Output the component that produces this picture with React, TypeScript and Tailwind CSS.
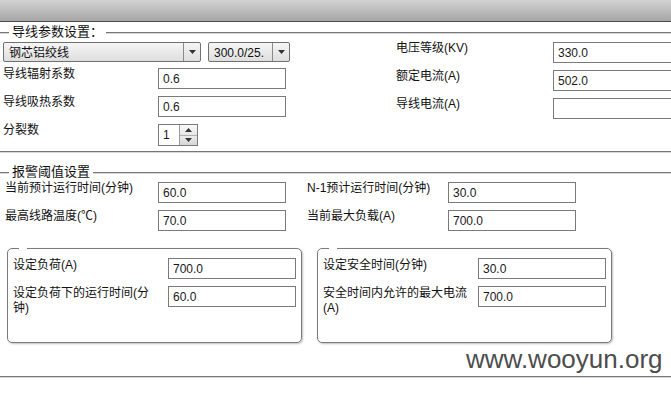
import React from 'react';

const FONT = "font-['Liberation_Sans','Noto_Sans_CJK_SC',sans-serif]";

function Line() {
  return <div className="h-px bg-[#767676] shadow-[0_1px_0_#d8d8d8]" />;
}

function Legend({ text }: { text: string }) {
  return (
    <div className="flex items-start h-[20px]">
      <div className="w-[9px] mt-[10px]">
        <Line />
      </div>
      <span className="px-[3px] text-[13px] leading-[20px] text-[#111]">{text}</span>
      <div className="flex-1 mt-[10px]">
        <Line />
      </div>
    </div>
  );
}

function Arrow({ up }: { up?: boolean }) {
  return (
    <svg width="7" height="4" viewBox="0 0 7 4">
      <path d={up ? 'M0 4 L3.5 0 L7 4 Z' : 'M0 0 L7 0 L3.5 4 Z'} fill="#333" />
    </svg>
  );
}

function Select({ value, className }: { value: string; className: string }) {
  return (
    <div className={`flex h-[20px] border border-[#707070] rounded-[2px] bg-gradient-to-b from-[#f6f6f6] to-[#dedede] ${className}`}>
      <div className="flex-1 pl-[5px] pt-[3px] text-[12px] leading-[15px] text-[#111] overflow-hidden whitespace-nowrap">{value}</div>
      <div className="w-[17px] border-l border-[#8a8a8a] flex items-center justify-center">
        <Arrow />
      </div>
    </div>
  );
}

function Field({ value = '' }: { value?: string }) {
  return (
    <input
      readOnly
      value={value}
      className="h-[21px] w-[128px] shrink-0 border border-[#7a7a7a] bg-white px-[4px] text-[12px] text-[#1a1a1a] outline-none"
    />
  );
}

function Row({ label, value, labelW, className = '' }: { label: string; value?: string; labelW: string; className?: string }) {
  return (
    <div className={`flex items-start ${className}`}>
      <div className={`${labelW} -mt-px text-[12px] leading-[14px] text-[#111] shrink-0`}>{label}</div>
      <Field value={value} />
    </div>
  );
}

function BoxRow({ label, value, className = '' }: { label: string; value: string; className?: string }) {
  return (
    <div className={`flex items-start ${className}`}>
      <div className="w-[146px] mr-[9px] text-[12px] leading-[15px] text-[#111] shrink-0">{label}</div>
      <Field value={value} />
    </div>
  );
}

function Box({ children }: { children: React.ReactNode }) {
  return (
    <div className="relative w-[295px] h-[95px] shrink-0 border border-[#7a7a7a] rounded-[5px] shadow-[1px_1px_2px_rgba(0,0,0,0.25)] pl-[5px] pt-[9px]">
      <span className="absolute left-[11px] -top-[3px] w-[8px] h-[5px] bg-white" />
      {children}
    </div>
  );
}

export default function App() {
  return (
    <div className={`relative w-[671px] h-[393px] overflow-hidden bg-white ${FONT}`}>
      <div className="h-[22px] bg-gradient-to-b from-[#d2d2d2] to-[#a6a6a6] border-b border-[#4a4a4a]" />

      {/* 导线参数 */}
      <Legend text="导线参数设置：" />
      <div className="flex h-[109px]">
        <div className="w-[396px] shrink-0 pl-[3px]">
          <div className="flex gap-[7px]">
            <Select value="钢芯铝绞线" className="w-[198px]" />
            <Select value="300.0/25." className="w-[82px]" />
          </div>
          <Row label="导线辐射系数" value="0.6" labelW="w-[155px]" className="mt-[6px]" />
          <Row label="导线吸热系数" value="0.6" labelW="w-[155px]" className="mt-[7px]" />
          <div className="flex items-start mt-[7px]">
            <div className="w-[155px] -mt-px text-[12px] leading-[14px] text-[#111]">分裂数</div>
            <div className="flex h-[22px] w-[40px] border border-[#7a7a7a] bg-white">
              <div className="flex-1 pl-[4px] text-[12px] leading-[20px] text-[#1a1a1a]">1</div>
              <div className="w-[18px] border-l border-[#9a9a9a] flex flex-col">
                <div className="flex-1 flex items-center justify-center border-b border-[#b0b0b0] bg-gradient-to-b from-[#fafafa] to-[#e6e6e6]">
                  <Arrow up />
                </div>
                <div className="flex-1 flex items-center justify-center bg-gradient-to-b from-[#ececec] to-[#d6d6d6]">
                  <Arrow />
                </div>
              </div>
            </div>
          </div>
        </div>
        <div className="shrink-0">
          <Row label="电压等级(KV)" value="330.0" labelW="w-[157px]" />
          <Row label="额定电流(A)" value="502.0" labelW="w-[157px]" className="mt-[7px]" />
          <Row label="导线电流(A)" labelW="w-[157px]" className="mt-[7px]" />
        </div>
      </div>
      <Line />

      {/* 报警阈值 */}
      <div className="mt-[10px]">
        <Legend text="报警阈值设置" />
      </div>
      <div className="h-[194px]">
        <div className="flex">
          <div className="w-[307px] shrink-0 pl-[5px]">
            <Row label="当前预计运行时间(分钟)" value="60.0" labelW="w-[153px]" />
            <Row label="最高线路温度(℃)" value="70.0" labelW="w-[153px]" className="mt-[7px]" />
          </div>
          <div className="shrink-0">
            <Row label="N-1预计运行时间(分钟)" value="30.0" labelW="w-[141px]" />
            <Row label="当前最大负载(A)" value="700.0" labelW="w-[141px]" className="mt-[7px]" />
          </div>
        </div>
        <div className="flex gap-[15px] pl-[7px] mt-[17px]">
          <Box>
            <BoxRow label="设定负荷(A)" value="700.0" />
            <BoxRow label="设定负荷下的运行时间(分钟)" value="60.0" className="mt-[7px]" />
          </Box>
          <Box>
            <BoxRow label="设定安全时间(分钟)" value="30.0" />
            <BoxRow label="安全时间内允许的最大电流(A)" value="700.0" className="mt-[7px]" />
          </Box>
        </div>
      </div>
      <Line />

      <div className="absolute left-[466px] top-[344px] text-[26px] leading-[30px] text-[#4d4d4d] font-['Liberation_Sans',sans-serif]">
        www.wooyun.org
      </div>
    </div>
  );
}
